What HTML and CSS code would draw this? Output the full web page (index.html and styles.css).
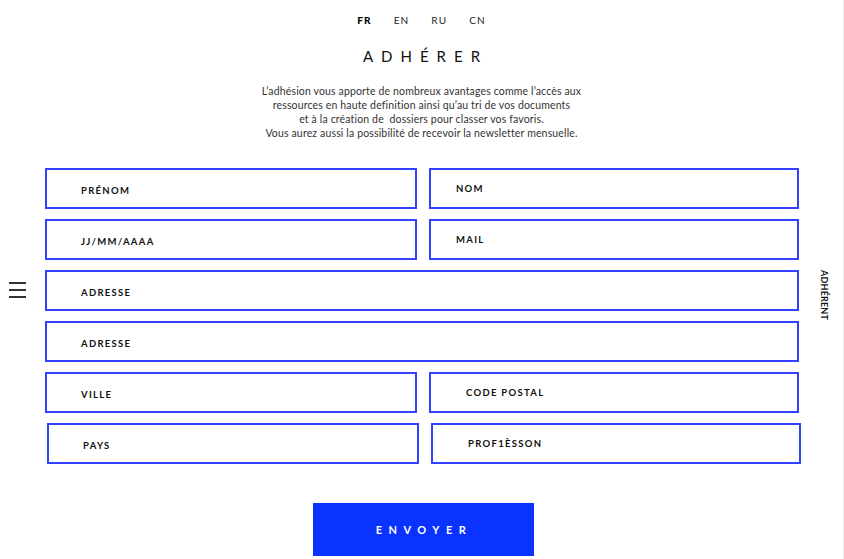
FILE: index.html
```html
<!DOCTYPE html>
<html lang="fr">
<head>
<meta charset="utf-8">
<title>Adhérer</title>
<link rel="stylesheet" href="styles.css">
</head>
<body>
<div class="page">
  <nav class="langs">
    <a class="lang active">FR</a>
    <a class="lang">EN</a>
    <a class="lang">RU</a>
    <a class="lang">CN</a>
  </nav>
  <h1 class="title">ADHÉRER</h1>
  <p class="intro">L’adhésion vous apporte de nombreux avantages comme l’accès aux<br>ressources en haute definition ainsi qu’au tri de vos documents<br>et à la création de&nbsp; dossiers pour classer vos favoris.<br>Vous aurez aussi la possibilité de recevoir la newsletter mensuelle.</p>

  <form class="form">
    <div class="field"><span class="label">PRÉNOM</span></div>
    <div class="field right-tight"><span class="label up">NOM</span></div>
    <div class="field"><span class="label">JJ/MM/AAAA</span></div>
    <div class="field right-tight"><span class="label up">MAIL</span></div>
    <div class="field wide"><span class="label">ADRESSE</span></div>
    <div class="field wide"><span class="label">ADRESSE</span></div>
    <div class="field"><span class="label">VILLE</span></div>
    <div class="field right-loose"><span class="label up">CODE POSTAL</span></div>
    <div class="field shift"><span class="label">PAYS</span></div>
    <div class="field shift right-loose"><span class="label up">PROF1ÈSSON</span></div>
  </form>

  <div class="actions">
    <button class="submit" type="button">ENVOYER</button>
  </div>

  <div class="burger"><span></span><span></span><span></span></div>
  <div class="side-label">ADHÉRENT</div>
</div>
</body>
</html>
```

FILE: styles.css
```css
* { box-sizing: border-box; }
html, body { margin: 0; padding: 0; background: #fff; }
body {
  font-family: Lato, "Noto Sans", sans-serif;
  color: #1a1a1a;
}
.page {
  position: relative;
  width: 844px;
  height: 559px;
  overflow: hidden;
  border-right: 1px solid #eeeeee;
}
.langs {
  display: flex;
  justify-content: center;
  gap: 22px;
  padding-top: 14px;
  height: 27px;
}
.lang {
  font-size: 10px;
  font-weight: 400;
  letter-spacing: 1.1px;
  color: #222;
  line-height: 12px;
}
.lang.active { font-weight: 900; color: #000; }
.title {
  margin: 21px 0 0;
  text-align: center;
  font-size: 15px;
  font-weight: 400;
  letter-spacing: 8px;
  padding-left: 8px;
  line-height: 17px;
  color: #111;
}
.intro {
  margin: 19px 0 0;
  text-align: center;
  font-size: 10.5px;
  line-height: 14px;
  color: #333;
  font-weight: 400;
  letter-spacing: 0.15px;
}
.form {
  display: grid;
  grid-template-columns: 372px 370px;
  column-gap: 12px;
  row-gap: 10px;
  margin: 28px 0 0 45px;
  width: 754px;
}
.field {
  height: 41px;
  border: 2px solid #3440ff;
  display: flex;
  align-items: center;
  padding: 4px 0 0 34px;
}
.field.wide { grid-column: 1 / -1; }
.field.right-tight { padding-left: 25px; }
.field.right-loose { padding-left: 35px; }
.field.shift { margin-left: 2px; margin-right: -2px; }
.label {
  font-size: 9.5px;
  font-weight: 700;
  letter-spacing: 1.3px;
  color: #111;
  line-height: 12px;
}
.label.up { margin-top: -4px; }
.actions {
  display: flex;
  justify-content: center;
  margin-top: 39px;
  padding-left: 3px;
}
.submit {
  width: 221px;
  height: 53px;
  background: #0a33ff;
  border: none;
  color: #fff;
  font-family: Lato, "Noto Sans", sans-serif;
  font-size: 11px;
  font-weight: 700;
  letter-spacing: 6.5px;
  padding-left: 8px;
}
.burger {
  position: absolute;
  left: 9px;
  top: 282px;
  width: 17px;
  display: flex;
  flex-direction: column;
  gap: 5.5px;
}
.burger span {
  display: block;
  height: 1.5px;
  background: #333;
}
.side-label {
  position: absolute;
  left: 819px;
  top: 270px;
  writing-mode: vertical-rl;
  font-size: 9px;
  font-weight: 700;
  letter-spacing: 0.2px;
  color: #111;
}
```
